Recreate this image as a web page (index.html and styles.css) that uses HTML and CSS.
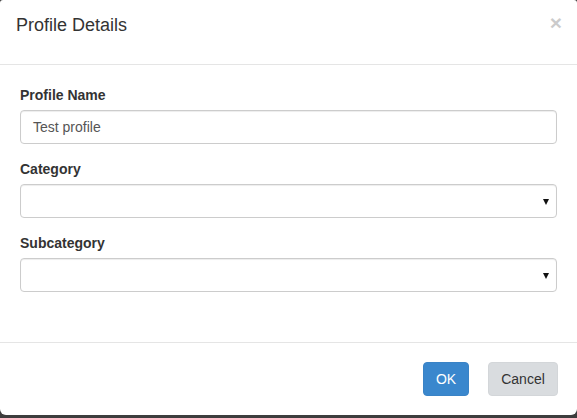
FILE: index.html
```html
<!DOCTYPE html>
<html>
<head>
<meta charset="utf-8">
<link rel="stylesheet" href="styles.css">
</head>
<body>
<div class="modal">
  <div class="modal-header">
    <h4 class="modal-title">Profile Details</h4>
    <span class="close">&times;</span>
  </div>
  <div class="modal-body">
    <div class="form-group">
      <label class="label">Profile Name</label>
      <div class="input">Test profile</div>
    </div>
    <div class="form-group">
      <label class="label">Category</label>
      <div class="input select"></div>
    </div>
    <div class="form-group">
      <label class="label">Subcategory</label>
      <div class="input select"></div>
    </div>
  </div>
  <div class="modal-footer">
    <button class="btn btn-primary">OK</button>
    <button class="btn btn-default">Cancel</button>
  </div>
</div>
</body>
</html>
```
FILE: styles.css
```css
* { box-sizing: border-box; }
html, body {
  margin: 0;
  padding: 0;
  height: 100%;
}
body {
  background: #3d3d3d;
  font-family: "Liberation Sans", Arial, sans-serif;
  font-size: 14px;
  color: #333;
  line-height: 1.42857;
}
.modal {
  width: 577px;
  height: 415px;
  background: #fff;
  border-radius: 3px 3px 6px 6px;
  display: flex;
  flex-direction: column;
}
.modal-header {
  height: 65px;
  border-bottom: 1px solid #e5e5e5;
  padding: 12px 15px 0 16px;
  display: flex;
  justify-content: space-between;
  align-items: flex-start;
}
.modal-title {
  margin: 0;
  font-size: 18px;
  font-weight: normal;
  line-height: 26px;
  color: #333;
}
.close {
  font-size: 21px;
  font-weight: bold;
  line-height: 1;
  color: #000;
  opacity: 0.2;
  margin-top: 0;
  margin-right: 0;
}
.modal-body {
  padding: 20px 20px 0 20px;
  flex: 1;
}
.form-group {
  margin-bottom: 15px;
}
.label {
  display: block;
  font-weight: bold;
  margin-bottom: 4px;
  padding-top: 1px;
  height: 21px;
}
.input {
  height: 34px;
  border: 1px solid #ccc;
  border-radius: 4px;
  padding: 6px 12px;
  color: #555;
  font-size: 14px;
  line-height: 20px;
  box-shadow: inset 0 1px 1px rgba(0,0,0,0.075);
  position: relative;
}
.select::after {
  content: "";
  position: absolute;
  right: 7px;
  top: 14px;
  border-left: 3.5px solid transparent;
  border-right: 3.5px solid transparent;
  border-top: 6px solid #111;
}
.modal-footer {
  border-top: 1px solid #e5e5e5;
  height: 73px;
  padding: 19px 19px 0 0;
  display: flex;
  justify-content: flex-end;
  align-items: flex-start;
  gap: 19px;
}
.btn {
  height: 34px;
  border-radius: 4px;
  font-family: "Liberation Sans", Arial, sans-serif;
  font-size: 14px;
  padding: 6px 12px;
  line-height: 20px;
  border: 1px solid transparent;
}
.btn-primary {
  width: 46px;
  background: #3a87cd;
  border-color: #3a83c6;
  color: #fff;
  padding: 6px 0;
}
.btn-default {
  width: 70px;
  background: #d9dcdf;
  border-color: #d3d6d9;
  color: #333;
  padding: 6px 0;
}
```
